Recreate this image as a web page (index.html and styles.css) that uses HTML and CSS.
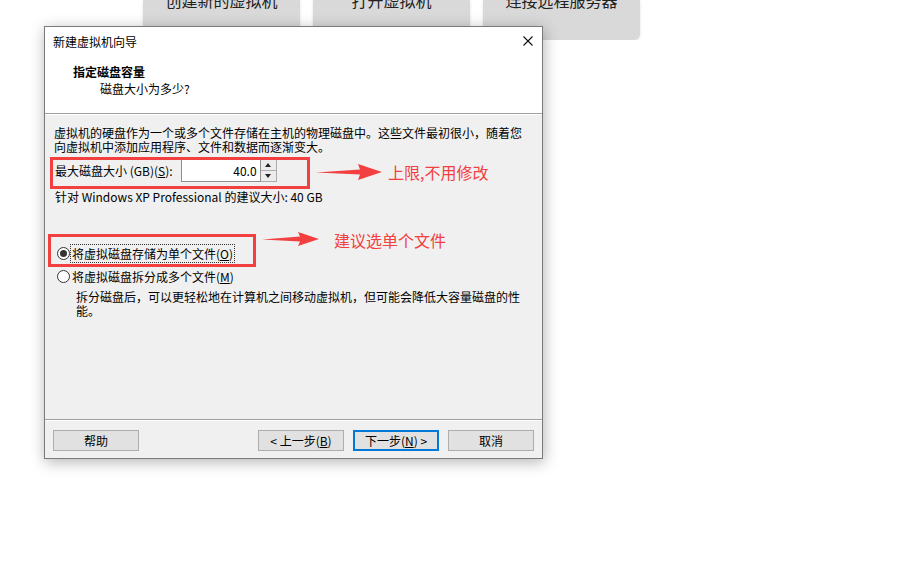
FILE: index.html
```html
<!DOCTYPE html>
<html lang="zh-CN">
<head>
  <meta charset="UTF-8">
  <meta name="viewport" content="width=device-width, initial-scale=1.0">
  <title>新建虚拟机向导</title>
  <link rel="stylesheet" href="styles.css">
</head>
<body>
  <div class="launcher">
    <div class="launch-card"><span>创建新的虚拟机</span></div>
    <div class="launch-card"><span>打开虚拟机</span></div>
    <div class="launch-card"><span>连接远程服务器</span></div>
  </div>

  <div class="dialog">
    <div class="dialog-head">
      <div class="titlebar">
        <span class="title">新建虚拟机向导</span>
        <svg class="close" width="10" height="10" viewBox="0 0 10 10">
          <path d="M0.5 0.5 L9.5 9.5 M9.5 0.5 L0.5 9.5" stroke="#111" stroke-width="1.1" fill="none"/>
        </svg>
      </div>
      <div class="heading">指定磁盘容量</div>
      <div class="subheading">磁盘大小为多少?</div>
    </div>

    <div class="dialog-body">
      <p class="intro">虚拟机的硬盘作为一个或多个文件存储在主机的物理磁盘中。这些文件最初很小，随着您向虚拟机中添加应用程序、文件和数据而逐渐变大。</p>

      <div class="size-row">
        <label class="size-label">最大磁盘大小 (GB)(<u>S</u>):</label>
        <div class="size-input">40.0</div>
        <div class="spinner">
          <span class="spin-up"></span>
          <span class="spin-down"></span>
        </div>
      </div>
      <p class="hint">针对 Windows XP Professional 的建议大小: 40 GB</p>

      <div class="radio-row first">
        <span class="radio checked"></span>
        <span class="radio-text focused">将虚拟磁盘存储为单个文件(<u>O</u>)</span>
      </div>
      <div class="radio-row">
        <span class="radio"></span>
        <span class="radio-text">将虚拟磁盘拆分成多个文件(<u>M</u>)</span>
      </div>
      <p class="radio-desc">拆分磁盘后，可以更轻松地在计算机之间移动虚拟机，但可能会降低大容量磁盘的性能。</p>
    </div>

    <div class="dialog-foot">
      <button class="btn">帮助</button>
      <div class="foot-right">
        <button class="btn">&lt; 上一步(<u>B</u>)</button>
        <button class="btn default">下一步(<u>N</u>) &gt;</button>
        <button class="btn">取消</button>
      </div>
    </div>

    <!-- annotations drawn over the dialog -->
    <div class="mark mark-size"></div>
    <svg class="arrow arrow-size" width="66" height="18" viewBox="0 0 66 18">
      <polygon points="0,9.5 44,6.5 42,1 66,9 42,17 44,11.5" fill="#f23f3f"/>
    </svg>
    <span class="note note-size">上限,不用修改</span>

    <div class="mark mark-file"></div>
    <svg class="arrow arrow-file" width="57" height="16" viewBox="0 0 57 16">
      <polygon points="0,8.5 38,5.5 36,1 57,8 36,15 38,10.5" fill="#f23f3f"/>
    </svg>
    <span class="note note-file">建议选单个文件</span>
  </div>
</body>
</html>
```

FILE: styles.css
```css
body {
  margin: 0;
  background-color: #fff;
  font-family: "Noto Sans CJK SC", "Noto Sans", sans-serif;
  font-size: 12px;
  color: #000;
}
p {
  margin: 0;
}

/* background launcher cards, mostly hidden above the window */
.launcher {
  display: flex;
  gap: 13px;
  padding-left: 143px;
}
.launch-card {
  width: 157px;
  height: 40px;
  background-color: #d9d9d9;
  border-radius: 0 0 6px 6px;
  box-shadow: 0 1px 3px rgba(0, 0, 0, 0.12);
  text-align: center;
  overflow: hidden;
}
.launch-card span {
  display: block;
  margin-top: -10px;
  font-size: 16px;
  line-height: 20px;
  color: #222;
}

/* wizard window */
.dialog {
  position: absolute;
  left: 44px;
  top: 26px;
  width: 499px;
  height: 433px;
  box-sizing: border-box;
  border: 1px solid #7a7a7a;
  background-color: #f0f0f0;
  box-shadow: 1px 3px 14px rgba(0, 0, 0, 0.3);
  display: flex;
  flex-direction: column;
}
.dialog-head {
  background-color: #fff;
  height: 86px;
  border-bottom: 1px solid #a0a0a0;
  box-shadow: 0 1px 0 #fff;
}
.titlebar {
  height: 28px;
  display: flex;
  align-items: center;
  justify-content: space-between;
  padding: 0 9px 0 8px;
}
.heading {
  margin-top: 9px;
  padding-left: 28px;
  font-weight: bold;
  line-height: 16px;
}
.subheading {
  padding-left: 55px;
  line-height: 18px;
}

.dialog-body {
  flex: 1;
  padding: 12px 14px 0 9px;
}
.intro {
  line-height: 14px;
}
.size-row {
  display: flex;
  align-items: center;
  margin-top: 5px;
  padding-left: 1px;
}
.size-label {
  margin-right: 8px;
}
.size-input {
  width: 75px;
  height: 21px;
  line-height: 21px;
  padding-right: 3px;
  border: 1px solid #8f8f8f;
  background-color: #fff;
  text-align: right;
}
.spinner {
  width: 15px;
  height: 21px;
  border: 1px solid #adadad;
  border-left: none;
  display: flex;
  flex-direction: column;
  background-color: #ececec;
}
.spinner span {
  flex: 1;
  display: flex;
  align-items: center;
  justify-content: center;
}
.spin-up {
  border-bottom: 1px solid #adadad;
}
.spin-up::after {
  content: "";
  border: 3px solid transparent;
  border-bottom: 4px solid #222;
  border-top: none;
}
.spin-down::after {
  content: "";
  border: 3px solid transparent;
  border-top: 4px solid #222;
  border-bottom: none;
}
.hint {
  margin-top: 8px;
  padding-left: 1px;
  line-height: 14px;
}

.radio-row {
  display: flex;
  align-items: center;
  height: 16px;
  margin-top: 7px;
  padding-left: 3px;
}
.radio-row.first {
  margin-top: 41px;
}
.radio {
  width: 11px;
  height: 11px;
  border: 1px solid #333;
  border-radius: 50%;
  background-color: #fff;
  display: flex;
  align-items: center;
  justify-content: center;
}
.radio.checked::after {
  content: "";
  width: 7px;
  height: 7px;
  border-radius: 50%;
  background-color: #333;
}
.radio-text {
  padding: 0 1px;
  border: 1px dotted transparent;
}
.radio-text.focused {
  border-color: #333;
}
.radio-desc {
  margin-top: 6px;
  padding-left: 22px;
  line-height: 14px;
}

.dialog-foot {
  display: flex;
  justify-content: space-between;
  padding: 10px 8px 7px 8px;
  border-top: 1px solid #a0a0a0;
  box-shadow: inset 0 1px 0 #fff;
}
.foot-right {
  display: flex;
  gap: 9px;
}
.btn {
  width: 86px;
  height: 21px;
  padding: 0;
  border: 1px solid #adadad;
  background-color: #e1e1e1;
  font-family: inherit;
  font-size: 12px;
  color: #000;
}
.btn.default {
  border: 2px solid #0078d7;
}

/* red annotations */
.mark {
  position: absolute;
  border: 3px solid #f23f3f;
}
.mark-size {
  left: 5px;
  top: 130px;
  width: 254px;
  height: 26px;
}
.mark-file {
  left: 3px;
  top: 207px;
  width: 202px;
  height: 27px;
}
.arrow {
  position: absolute;
}
.arrow-size {
  left: 271px;
  top: 136px;
}
.arrow-file {
  left: 217px;
  top: 204px;
}
.note {
  position: absolute;
  font-size: 16px;
  line-height: 20px;
  color: #f23f3f;
}
.note-size {
  left: 343px;
  top: 135px;
}
.note-file {
  left: 289px;
  top: 203px;
}
```
